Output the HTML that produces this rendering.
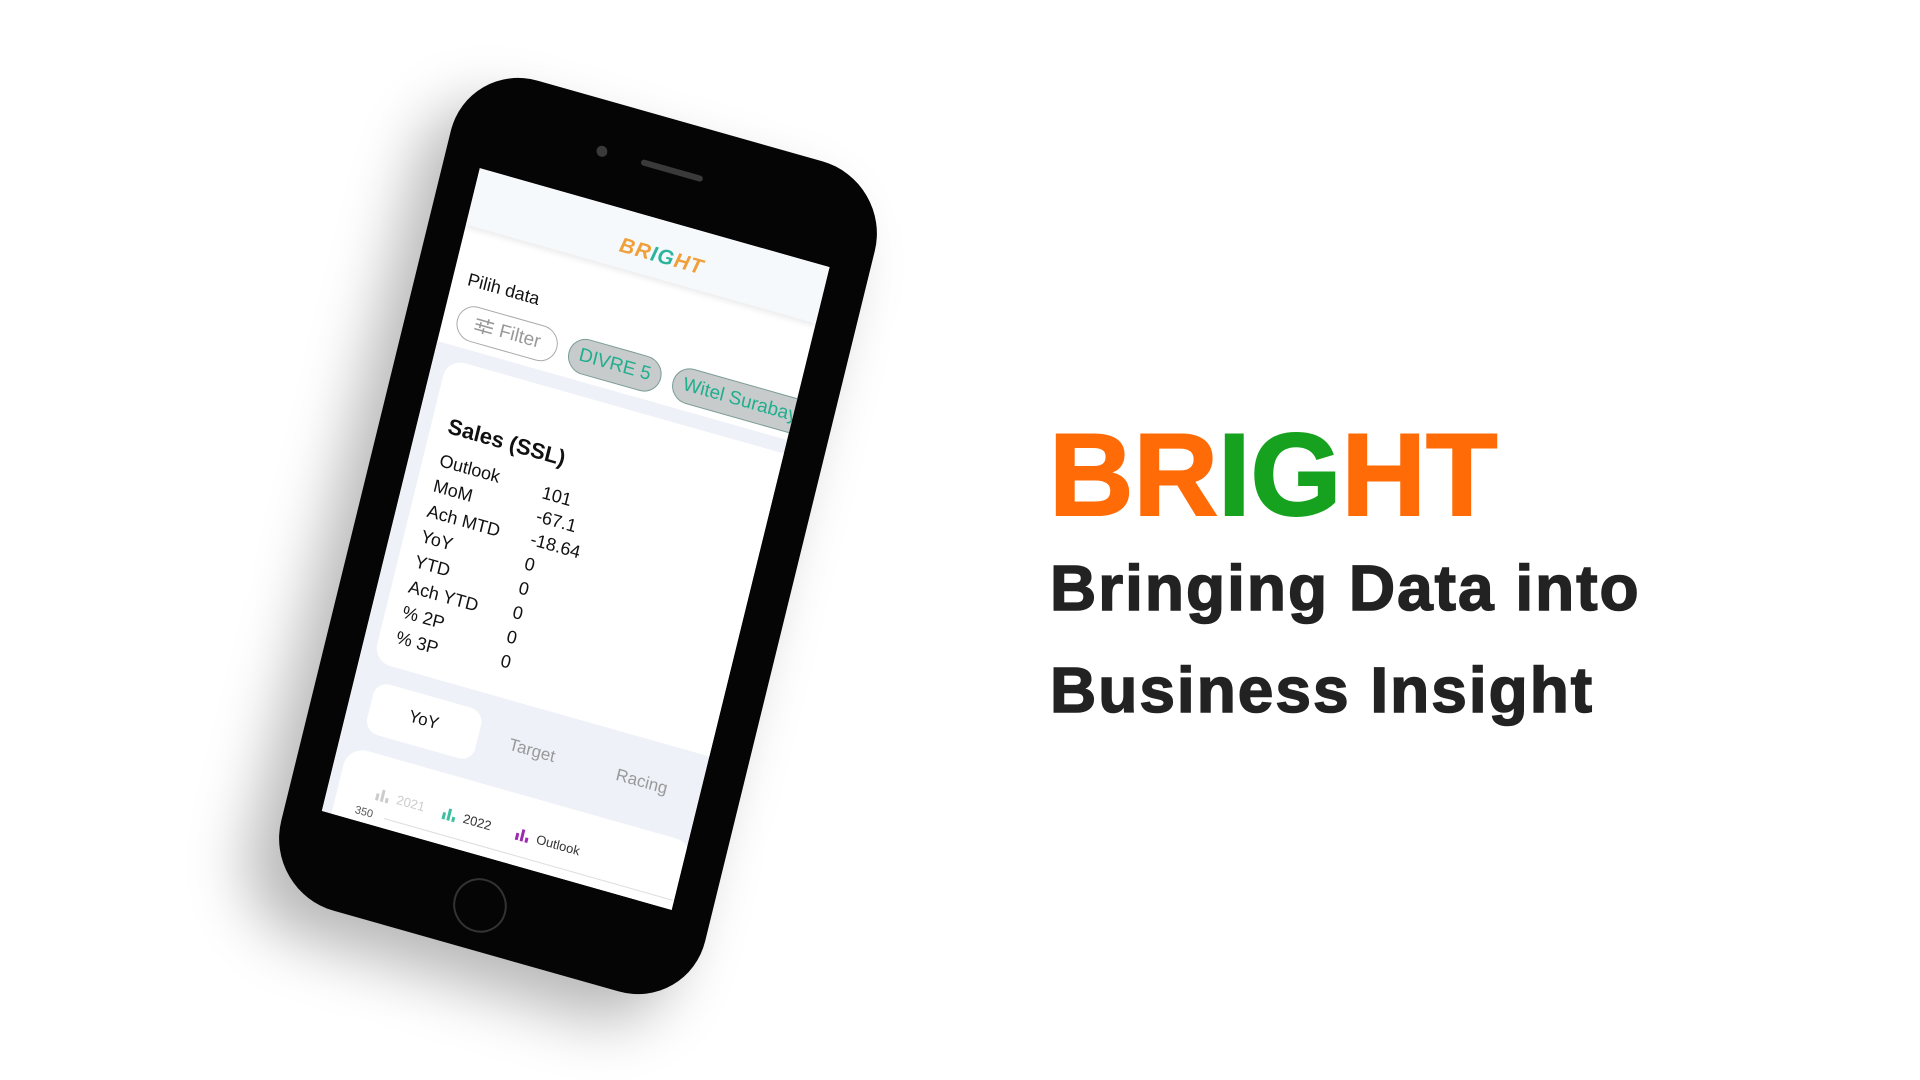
<!DOCTYPE html>
<html><head><meta charset="utf-8"><style>
html,body{margin:0;padding:0;width:1920px;height:1080px;background:#fff;overflow:hidden;font-family:"Liberation Sans",sans-serif}
.phone{position:absolute;left:0;top:0;width:440px;height:855px;transform-origin:0 0;transform:matrix(0.9636,0.2727,-0.2386,0.9708,468,61);}
.body{position:absolute;inset:0;background:#050505;border-radius:72px;box-shadow:-25px 35px 60px rgba(0,0,0,0.28);}
.screen{position:absolute;left:37px;top:100px;width:363px;height:662px;background:#fff;overflow:hidden}
.hdr{position:absolute;left:0;top:0;width:100%;height:58px;background:#f6f9fc;box-shadow:0 3px 6px rgba(0,0,0,0.08)}
.logo{position:absolute;left:16px;width:100%;top:24px;text-align:center;font-weight:bold;font-style:italic;font-size:21px;color:#f0a03a;letter-spacing:1px}
.logo span{color:#2bb59c}
.t{position:absolute;white-space:nowrap}
.chip{position:absolute;height:36px;border-radius:20px;box-sizing:border-box;font-size:19px;line-height:34px;text-align:center;white-space:nowrap}
.gray{position:absolute;left:0;top:178px;width:100%;height:500px;background:#eef1f8}
.card{position:absolute;background:#fff;border-radius:18px}
.row{position:absolute;left:31px;font-size:18px;color:#111}
.val{position:absolute;left:138px;font-size:18px;color:#111}
.h{-webkit-text-stroke:1.5px #222}
</style></head><body>
<div class="phone">
 <div class="body"></div>
 <div style="position:absolute;left:146px;top:45px;width:11px;height:11px;border-radius:50%;background:#3a3a3a"></div>
 <div style="position:absolute;left:192px;top:47px;width:64px;height:6px;border-radius:3px;background:#3a3a3a"></div>
 <div style="position:absolute;left:186px;top:783px;width:54px;height:54px;border-radius:50%;border:2px solid #333;box-sizing:border-box"></div>
 <div class="screen">
  <div class="gray"></div>
  <div class="hdr"></div>
  <div class="logo">BR<span>IG</span>HT</div>
  <div class="t" style="left:15px;top:100px;font-size:18px;color:#111">Pilih data</div>
  <div class="chip" style="left:14px;top:134px;width:104px;border:1.5px solid #aaa;color:#999;background:#fff">
   <svg width="20" height="16" viewBox="0 0 20 16" style="vertical-align:-2px;margin-right:6px"><g stroke="#999" stroke-width="1.6"><path d="M1 3h18M1 8h18M1 13h18"/><path d="M13 0v6M6 5v6M10 10v6"/></g></svg>Filter</div>
  <div class="chip" style="left:130px;top:135px;width:96px;border:1.5px solid #7a9c95;color:#1fae8e;background:#c8cbcb">DIVRE 5</div>
  <div class="chip" style="left:238px;top:135px;width:160px;border:1.5px solid #7a9c95;color:#1fae8e;background:#c8cbcb;text-align:left;padding-left:10px">Witel Surabaya</div>
  <div class="card" style="left:14px;top:192px;width:380px;height:312px"></div>
  <div class="t" style="left:31px;top:244px;font-size:22px;font-weight:bold;color:#111">Sales (SSL)</div>
  <div class="row" style="top:282px">Outlook</div>
  <div class="row" style="top:308px">MoM</div>
  <div class="row" style="top:334px">Ach MTD</div>
  <div class="row" style="top:360px">YoY</div>
  <div class="row" style="top:386px">YTD</div>
  <div class="row" style="top:412px">Ach YTD</div>
  <div class="row" style="top:438px">% 2P</div>
  <div class="row" style="top:464px">% 3P</div>
  <div class="val" style="top:285px">101</div>
  <div class="val" style="top:309px">-67.1</div>
  <div class="val" style="top:333px">-18.64</div>
  <div class="val" style="top:358px">0</div>
  <div class="val" style="top:383px">0</div>
  <div class="val" style="top:408px">0</div>
  <div class="val" style="top:433px">0</div>
  <div class="val" style="top:458px">0</div>
  <div class="card" style="left:22px;top:522px;width:112px;height:52px;border-radius:14px"></div>
  <div class="t" style="left:62px;top:537px;font-size:17px;color:#111">YoY</div>
  <div class="t" style="left:166px;top:537px;font-size:17px;color:#999">Target</div>
  <div class="t" style="left:277px;top:537px;font-size:17px;color:#999">Racing</div>
  <div class="card" style="left:10px;top:592px;width:360px;height:120px;border-radius:20px"></div>
  <svg class="t" style="left:48px;top:622px" width="18" height="16"><g fill="#ccc"><rect x="1" y="8" width="3" height="7"/><rect x="6" y="3" width="3" height="12"/><rect x="11" y="10" width="3" height="5"/></g></svg>
  <div class="t" style="left:70px;top:623px;font-size:13px;color:#ccc">2021</div>
  <svg class="t" style="left:117px;top:622px" width="18" height="16"><g fill="#3cc0a0"><rect x="1" y="8" width="3" height="7"/><rect x="6" y="3" width="3" height="12"/><rect x="11" y="10" width="3" height="5"/></g></svg>
  <div class="t" style="left:139px;top:623px;font-size:13px;color:#333">2022</div>
  <svg class="t" style="left:193px;top:622px" width="18" height="16"><g fill="#9b2bb0"><rect x="1" y="8" width="3" height="7"/><rect x="6" y="3" width="3" height="12"/><rect x="11" y="10" width="3" height="5"/></g></svg>
  <div class="t" style="left:215px;top:623px;font-size:13px;color:#333">Outlook</div>
  <div class="t" style="left:32px;top:646px;font-size:11px;color:#555">350</div>
  <div class="t" style="left:62px;top:652px;width:300px;height:1px;background:#ddd"></div>
 </div>
</div>
<div class="t" style="left:1049px;top:405px;font-size:117px;font-weight:bold;color:#ff6b06;line-height:1.2;-webkit-text-stroke:2px #ff6b06">BR<span style="color:#16a21f;-webkit-text-stroke:2px #16a21f">IG</span>HT</div>
<div class="t h" style="left:1050px;top:550px;font-size:64px;font-weight:bold;color:#222;letter-spacing:2px;line-height:1.2">Bringing Data into</div>
<div class="t h" style="left:1050px;top:652px;font-size:64px;font-weight:bold;color:#222;letter-spacing:2px;line-height:1.2">Business Insight</div>
</body></html>
